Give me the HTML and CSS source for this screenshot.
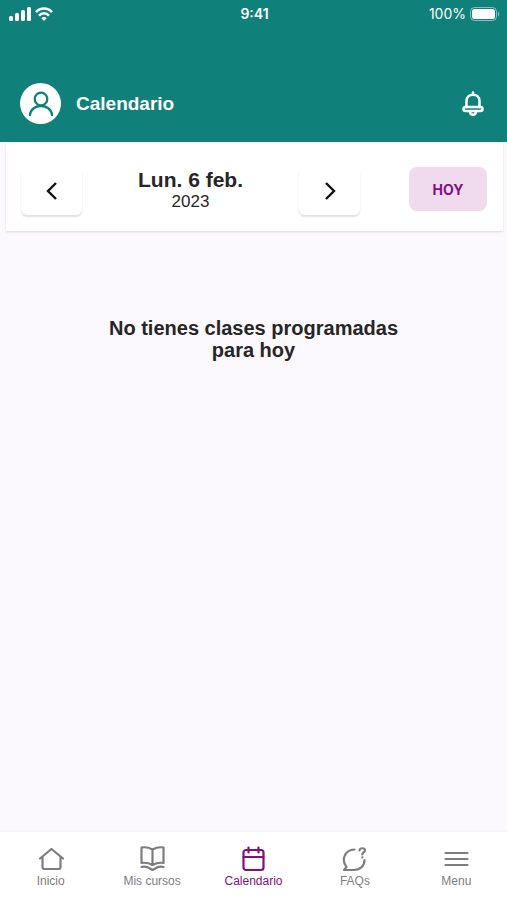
FILE: index.html
```html
<!DOCTYPE html>
<html lang="es">
<head>
    <meta charset="UTF-8">
    <meta name="viewport" content="width=device-width, initial-scale=1.0">
    <title>Calendario</title>
    <link rel="stylesheet" href="styles.css">
</head>
<body>
    <header class="header">
        <div class="status-bar">
            <div class="status-left">
                <svg width="22" height="14" viewBox="0 0 22 14" fill="currentColor">
                    <rect x="0" y="9" width="4" height="5" rx="1.500"/>
                    <rect x="6" y="6" width="4" height="8" rx="1.500"/>
                    <rect x="12" y="3" width="4" height="11" rx="1.500"/>
                    <rect x="18" y="0" width="4" height="14" rx="1.500"/>
                </svg>
                <svg width="18" height="14" viewBox="0 0 18 14" fill="none" stroke="currentColor" stroke-width="2.600">
                    <path d="M1 5.200C5.500 0.200 12.500 0.200 17 5.200"/>
                    <path d="M4 8.600C7 5.400 11 5.400 14 8.600"/>
                    <path d="M6.300 11.200C7.800 9.600 10.200 9.600 11.700 11.200L9 13.900Z" fill="currentColor" stroke="none"/>
                </svg>
            </div>
            <span class="status-time">9:41</span>
            <div class="status-right">
                <span>100%</span>
                <svg width="30" height="14" viewBox="0 0 30 14">
                    <rect x="0.500" y="0.500" width="26" height="13" rx="4" fill="none" stroke="#fff" stroke-opacity="0.5"/>
                    <rect x="2" y="2" width="23" height="10" rx="2.500" fill="#fff"/>
                    <path d="M28 4.500C29.700 5.200 29.700 8.800 28 9.500Z" fill="#fff" fill-opacity="0.5"/>
                </svg>
            </div>
        </div>
        <div class="title-bar">
            <a class="avatar" href="#" aria-label="Perfil">
                <svg width="26" height="26" viewBox="0 0 26 26" fill="none" stroke="currentColor" stroke-width="2.300" stroke-linecap="round">
                    <circle cx="13" cy="8" r="6.300"/>
                    <path d="M2 24C3 12 23 12 24 24"/>
                </svg>
            </a>
            <h1>Calendario</h1>
            <button class="bell" type="button" aria-label="Notificaciones">
                <svg width="22" height="26" viewBox="0 0 22 26" fill="none" stroke="currentColor" stroke-width="2.500" stroke-linecap="round" stroke-linejoin="round">
                    <path d="M11 1.500V3.500M4.500 16V10C4.500 1.500 17.500 1.500 17.500 10V16"/>
                    <rect x="1.500" y="16" width="19" height="4" rx="2"/>
                    <path d="M8 21C8.500 24.500 13.500 24.500 14 21"/>
                </svg>
            </button>
        </div>
    </header>

    <main class="content">
        <div class="date-card">
            <button class="arrow" type="button" aria-label="Día anterior">
                <svg width="12" height="18" viewBox="0 0 12 18" fill="none" stroke="currentColor" stroke-width="2.400">
                    <path d="M10 1L2 9L10 17"/>
                </svg>
            </button>
            <div class="date">
                <h2>Lun. 6 feb.</h2>
                <p>2023</p>
            </div>
            <button class="arrow" type="button" aria-label="Día siguiente">
                <svg width="12" height="18" viewBox="0 0 12 18" fill="none" stroke="currentColor" stroke-width="2.400">
                    <path d="M2 1L10 9L2 17"/>
                </svg>
            </button>
            <button class="today" type="button">HOY</button>
        </div>
        <p class="message">No tienes clases programadas para hoy</p>
    </main>

    <nav class="tabs">
        <a class="tab" href="#">
            <svg width="28" height="28" viewBox="0 0 28 28">
                <path d="M3 13.500L14.500 4L26 13.500M5.500 12V22Q5.500 24 7.500 24H21.500Q23.500 24 23.500 22V12"/>
            </svg>
            <span>Inicio</span>
        </a>
        <a class="tab" href="#">
            <svg width="28" height="28" viewBox="0 0 28 28">
                <path d="M14.500 4.500Q9 1.500 3.500 2.500V18Q9 17 14.500 20Q20 17 25.500 18V2.500Q20 1.500 14.500 4.500ZM14.500 4.500V20M3.500 22Q7 21 10 22.500L14.500 25L19 22.500Q22 21 25.500 22"/>
            </svg>
            <span>Mis cursos</span>
        </a>
        <a class="tab active" href="#">
            <svg width="28" height="28" viewBox="0 0 28 28">
                <rect x="4.500" y="5" width="20" height="20" rx="2.500"/>
                <path d="M4.500 12H24.500M9.500 2.500V7.500M19.500 2.500V7.500"/>
            </svg>
            <span>Calendario</span>
        </a>
        <a class="tab" href="#">
            <svg width="28" height="28" viewBox="0 0 28 28">
                <path d="M13.500 4.500C3.500 5 0 15 5.500 22L3 25H13C19 25 23.500 21 23.500 15"/>
                <path d="M18.500 5.500C18.500 2.500 24 2.500 24 5.500C24 7.500 21.300 7 21.300 9.500M21.300 12.300V12.400"/>
            </svg>
            <span>FAQs</span>
        </a>
        <a class="tab" href="#">
            <svg width="28" height="28" viewBox="0 0 28 28">
                <path d="M3.500 8H25.500M3.500 14H25.500M3.500 20H25.500"/>
            </svg>
            <span>Menu</span>
        </a>
    </nav>
</body>
</html>
```
FILE: styles.css
```css
* {
    box-sizing: border-box;
}

body {
    display: flex;
    flex-direction: column;
    min-height: 100vh;
    margin: 0;
    font-family: "Liberation Sans", Arial, sans-serif;
    background-color: #fbf9fd;
    color: #262528;
}

h1, h2, p {
    margin: 0;
}

svg {
    display: block;
}

button {
    padding: 0;
    border: none;
    font-family: inherit;
    cursor: pointer;
}

.header {
    padding-bottom: 18px;
    background-color: #0f807a;
    color: #fff;
}

.status-bar {
    display: grid;
    grid-template-columns: 1fr auto 1fr;
    align-items: center;
    height: 27px;
    padding: 0 7px 0 9px;
    font-family: Inter, sans-serif;
    font-size: 14px;
}

.status-left, .status-right {
    display: flex;
    align-items: center;
    gap: 4px;
}

.status-right {
    justify-content: flex-end;
}

.status-time {
    font-weight: 600;
}

.title-bar {
    display: flex;
    align-items: center;
    gap: 15px;
    padding: 56px 23px 0 20px;
}

.title-bar h1 {
    flex: 1;
    font-size: 19px;
}

.avatar {
    display: flex;
    align-items: center;
    justify-content: center;
    width: 41px;
    height: 41px;
    border-radius: 50%;
    background-color: #fff;
    color: #0f807a;
}

.bell {
    background: none;
    color: #fff;
}

.content {
    flex: 1;
}

.date-card {
    display: flex;
    align-items: center;
    margin: 0 4px 0 6px;
    padding: 25px 16px 16px 15px;
    background-color: #fff;
    box-shadow: 0 1px 2px rgba(0, 0, 0, 0.12);
}

.arrow {
    display: flex;
    align-items: center;
    justify-content: center;
    width: 61px;
    height: 48px;
    border-radius: 6px;
    background-color: #fff;
    color: #111;
    box-shadow: 0 2px 2px rgba(0, 0, 0, 0.12);
}

.date {
    flex: 1;
    text-align: center;
}

.date h2 {
    font-size: 21px;
    line-height: 22px;
}

.date p {
    font-size: 17px;
    line-height: 22px;
}

.today {
    align-self: flex-start;
    width: 78px;
    height: 44px;
    margin-left: 49px;
    border-radius: 8px;
    background-color: #efdbed;
    color: #85107d;
    font-family: Inter, sans-serif;
    font-size: 14px;
    font-weight: 700;
}

.message {
    max-width: 320px;
    margin: 86px auto 0;
    font-size: 20px;
    font-weight: bold;
    line-height: 22px;
    text-align: center;
}

.tabs {
    display: grid;
    grid-template-columns: repeat(5, 1fr);
    padding: 13px 0 12px;
    background-color: #fff;
    box-shadow: 0 -1px 3px rgba(0, 0, 0, 0.04);
}

.tab {
    display: flex;
    flex-direction: column;
    align-items: center;
    gap: 1px;
    color: #7d7d7d;
    font-size: 12px;
    line-height: 14px;
    text-decoration: none;
}

.tab svg {
    fill: none;
    stroke: currentColor;
    stroke-width: 2.2;
    stroke-linecap: round;
    stroke-linejoin: round;
}

.tab.active {
    color: #80107a;
}
```
